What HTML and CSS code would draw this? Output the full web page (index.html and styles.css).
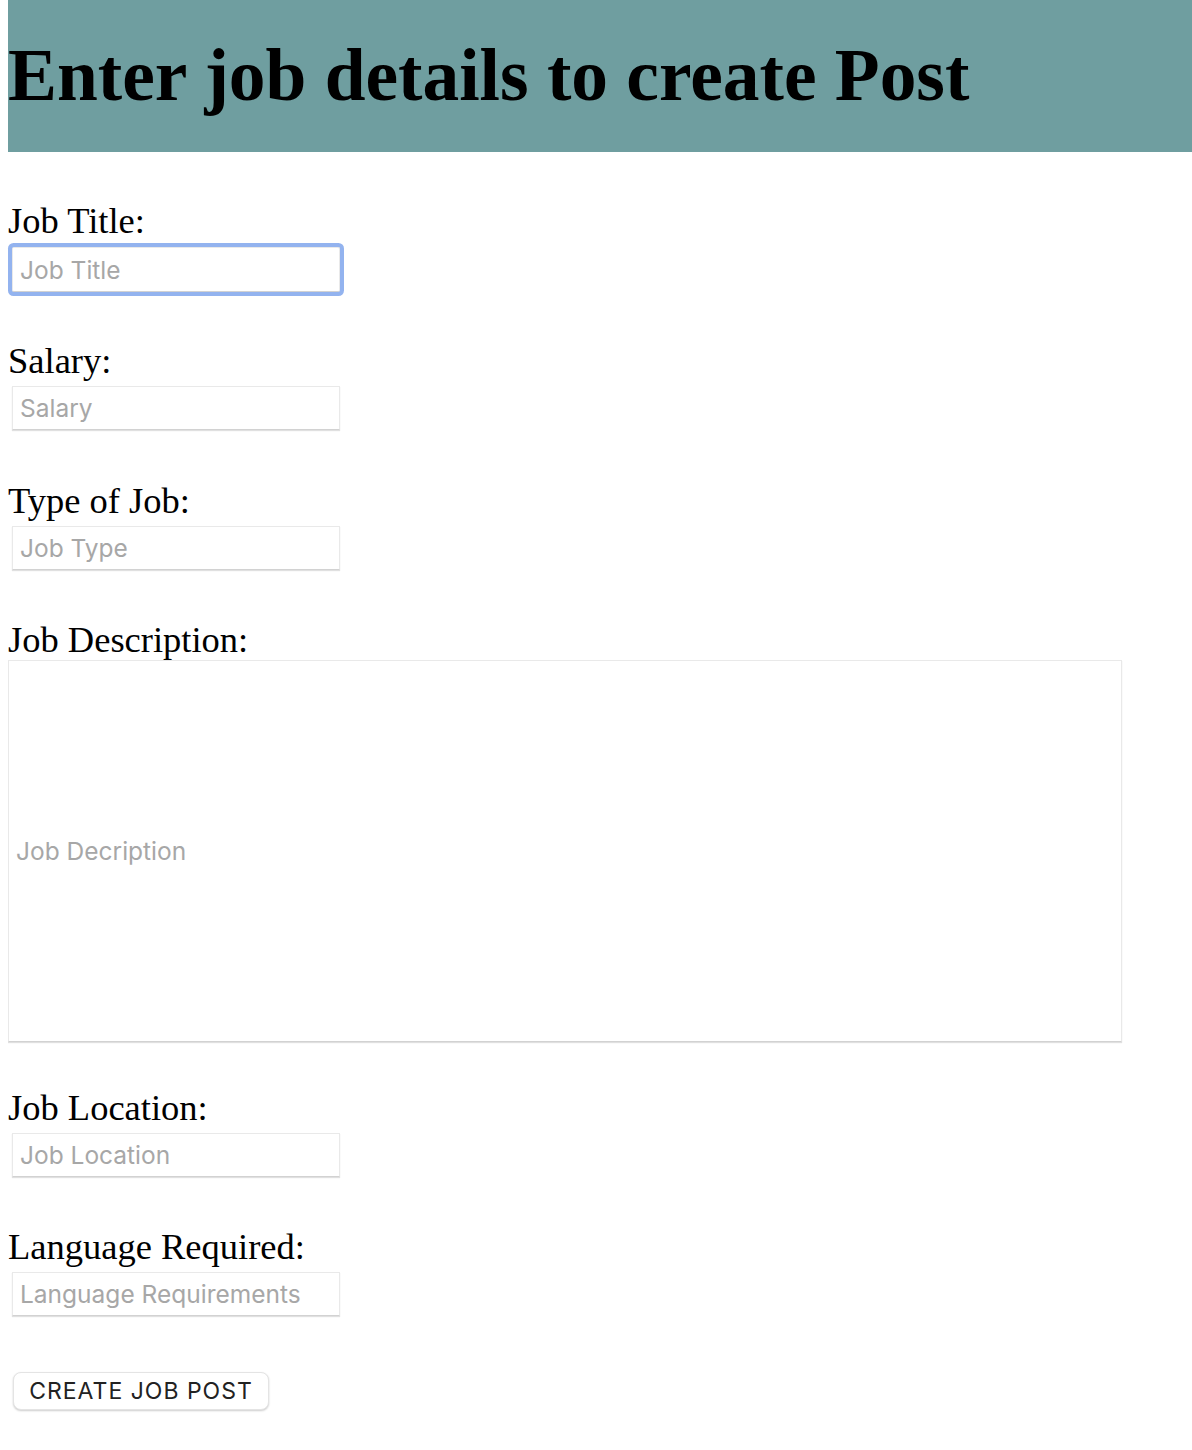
FILE: index.html
```html
<!DOCTYPE html>
<html>
<head>
<meta charset="utf-8">
<link rel="stylesheet" href="styles.css">
</head>
<body>
<header class="banner"><h1 class="banner-title">Enter job details to create Post</h1></header>
<form class="job-form">
  <div class="field field-first">
    <label class="field-label">Job Title:</label>
    <input class="field-input is-focused" type="text" placeholder="Job Title">
  </div>
  <div class="field field-second">
    <label class="field-label">Salary:</label>
    <input class="field-input" type="text" placeholder="Salary">
  </div>
  <div class="field">
    <label class="field-label">Type of Job:</label>
    <input class="field-input" type="text" placeholder="Job Type">
  </div>
  <div class="field field-desc">
    <label class="field-label">Job Description:</label>
    <input class="field-area" type="text" placeholder="Job Decription">
  </div>
  <div class="field field-after-area">
    <label class="field-label">Job Location:</label>
    <input class="field-input" type="text" placeholder="Job Location">
  </div>
  <div class="field field-last">
    <label class="field-label">Language Required:</label>
    <input class="field-input" type="text" placeholder="Language Requirements">
  </div>
  <div class="actions">
    <button class="submit-btn" type="button">CREATE JOB POST</button>
  </div>
</form>
</body>
</html>
```
FILE: styles.css
```css
html, body {
  background: #ffffff;
}
body {
  margin: 0 0 0 8px;
  font-family: "Liberation Serif", "Times New Roman", serif;
  color: #000;
}
.banner {
  background: #6f9ea0;
  height: 152px;
}
.banner-title {
  margin: 0;
  font-family: "Liberation Serif", "Times New Roman", serif;
  font-weight: bold;
  font-size: 73.4px;
  line-height: 152px;
  white-space: nowrap;
}
.job-form {
  display: flex;
  flex-direction: column;
}
.field {
  display: flex;
  flex-direction: column;
  align-items: flex-start;
  margin-top: 49px;
}
.field-first {
  margin-top: 47px;
}
.field-second {
  margin-top: 47px;
}
.field-desc {
  margin-top: 48px;
}
.field-after-area {
  margin-top: 44px;
}
.field-last {
  margin-top: 48px;
}
.field-label {
  font-size: 36.5px;
  line-height: 40px;
  padding-top: 2px;
  white-space: nowrap;
}
.field-input,
.field-area {
  box-sizing: border-box;
  border: 1px solid #e9e9e9;
  border-bottom-color: #d2d2d2;
  box-shadow: 0 1px 1px rgba(0, 0, 0, 0.12);
  background: #fff;
  font-family: Inter, "Noto Sans", sans-serif;
  font-size: 24.5px;
  padding: 0 7px;
  color: #000;
  outline: none;
}
.field-input {
  width: 328px;
  height: 44px;
  margin: 5px 0 0 4px;
}
.field-input.is-focused {
  margin-top: 6px;
  height: 45px;
  border-radius: 2px;
  box-shadow: 0 0 0 4px #93b3ef;
}
.field-area {
  width: 1114px;
  height: 382px;
  margin: 0;
  padding: 0 7px;
}
.field-input::placeholder,
.field-area::placeholder {
  color: #a7a7a7;
}
.actions {
  margin-top: 56px;
  padding-bottom: 40px;
}
.submit-btn {
  margin-left: 5px;
  width: 256px;
  height: 38px;
  border: 1px solid #e4e4e4;
  border-radius: 8px;
  background: #fff;
  box-shadow: 0 1px 2px rgba(0, 0, 0, 0.2);
  font-family: Inter, "Noto Sans", sans-serif;
  font-size: 23px;
  color: #222;
  padding: 0;
  letter-spacing: 1px;
}
```
